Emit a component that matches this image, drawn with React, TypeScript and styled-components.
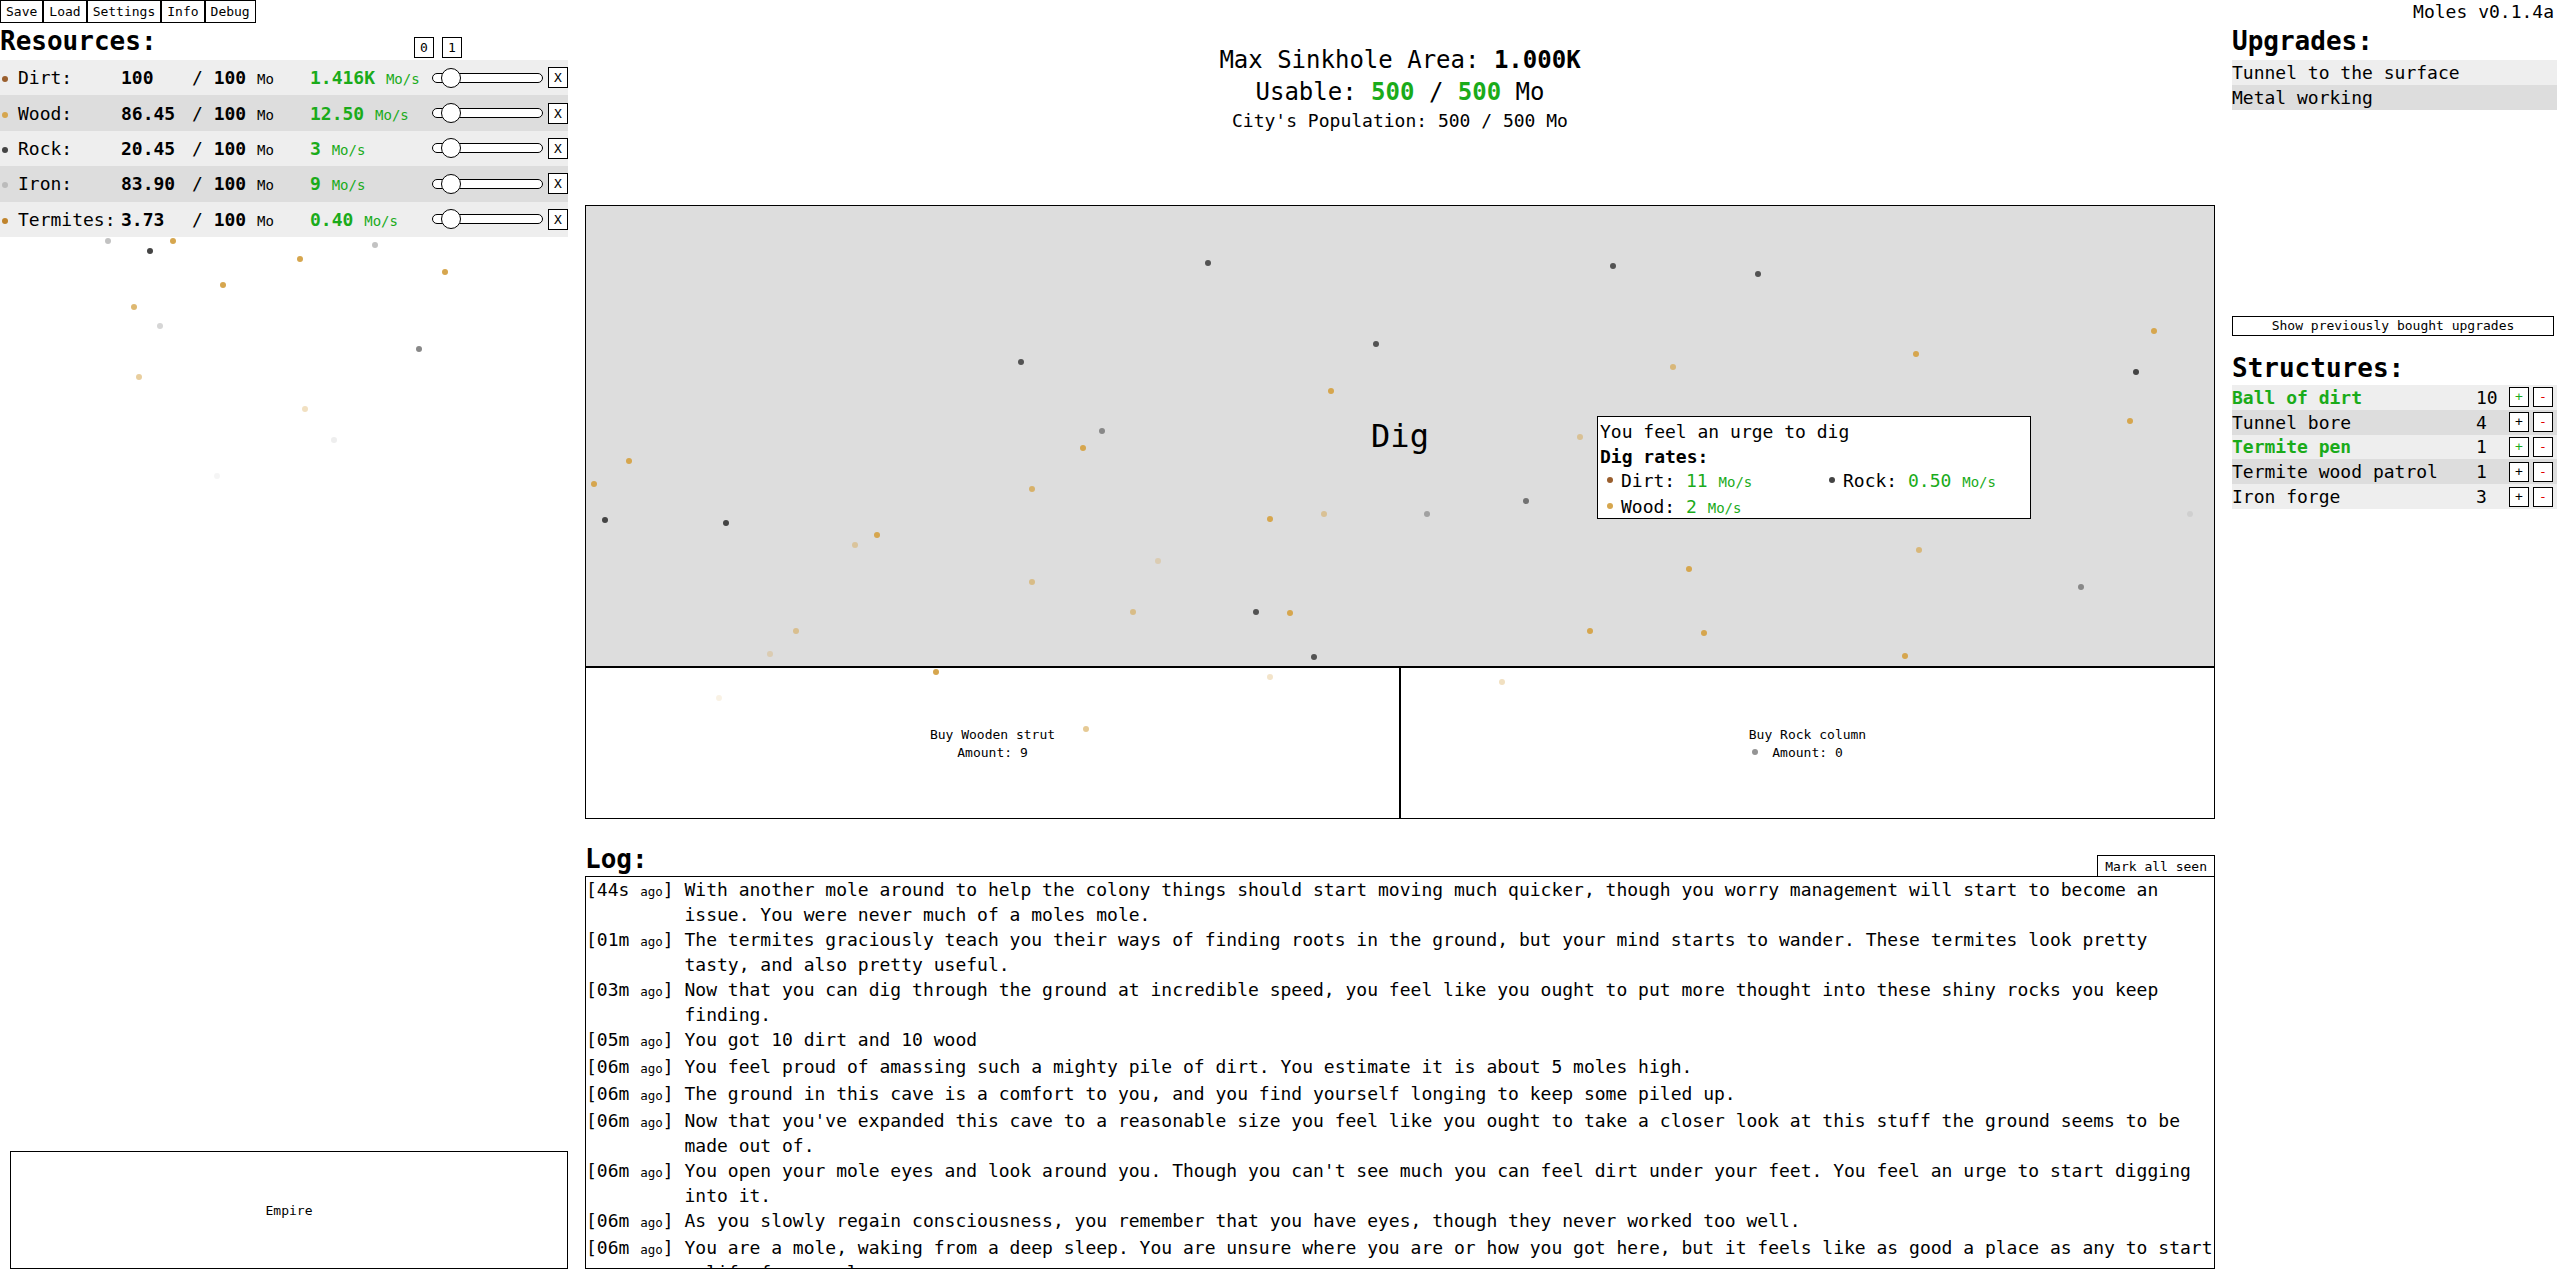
import React from "react";
import styled, { createGlobalStyle } from "styled-components";

const GREEN = "#1aab1a";
const MONO = `"DejaVu Sans Mono", "Liberation Mono", monospace`;

const GlobalStyle = createGlobalStyle`
  html, body { margin: 0; padding: 0; background: #ffffff; }
  body { font-family: ${MONO}; color: #000; }
  * { box-sizing: border-box; }
`;

const Page = styled.div`
  position: relative;
  display: grid;
  grid-template-columns: 568px 1630px 1fr;
  column-gap: 17px;
  width: 2557px;
  height: 1280px;
  overflow: hidden;
`;

/* ---------- shared ---------- */

const SmallButton = styled.button`
  font-family: ${MONO};
  font-size: 13px;
  color: #000;
  background: #fff;
  border: 1px solid #000;
  border-radius: 0;
  margin: 0;
  padding: 0 5px;
  height: 23px;
  line-height: 21px;
  cursor: pointer;
`;

const BoxButton = styled.button<{ $color?: string }>`
  font-family: ${MONO};
  font-size: 13px;
  color: ${(p) => p.$color ?? "#000"};
  background: #fff;
  border: 1px solid #000;
  border-radius: 0;
  margin: 0;
  padding: 0;
  width: 20px;
  height: 21px;
  line-height: 19px;
  text-align: center;
  cursor: pointer;
`;

const SectionTitle = styled.h2<{ $height?: number }>`
  margin: 0;
  font-size: 26px;
  font-weight: bold;
  line-height: ${(p) => p.$height ?? 37}px;
  height: ${(p) => p.$height ?? 37}px;
`;

const ShadedRow = styled.div<{ $dark: boolean }>`
  background: ${(p) => (p.$dark ? "#dddddd" : "#eeeeee")};
`;

const Small = styled.span`
  font-size: 14px;
  font-weight: normal;
`;

/* ---------- left column ---------- */

const LeftColumn = styled.div`
  display: flex;
  flex-direction: column;
  height: 1280px;
`;

const Nav = styled.nav`
  display: flex;
  height: 23px;
`;

const ResHeader = styled.div`
  display: flex;
  align-items: flex-end;
`;

const ResTitleCell = styled.div`
  flex: 0 0 414px;
`;

const ZoomButtons = styled.div`
  display: flex;
  gap: 8px;
  padding-bottom: 2px;
`;

const ResourceRow = styled(ShadedRow)`
  display: grid;
  grid-template-columns: 18px 103px 71px 118px 122px 116px 20px;
  align-items: center;
  height: 35.4px;
  font-size: 18px;
`;

const Dot = styled.span<{ $color: string }>`
  display: block;
  width: 6px;
  height: 6px;
  border-radius: 50%;
  background: ${(p) => p.$color};
  margin-left: 2px;
  margin-top: 3px;
`;

const ResName = styled.span``;

const ResValue = styled.span`
  font-weight: bold;
`;

const ResMax = styled.span`
  white-space: pre;
`;

const Bold = styled.b``;

const Rate = styled.span`
  color: ${GREEN};
  font-weight: bold;
  white-space: pre;
`;

const SliderCell = styled.div`
  position: relative;
  display: flex;
  align-items: center;
  height: 22px;
  padding-right: 5px;
`;

const SliderTrack = styled.div`
  width: 100%;
  height: 10px;
  border: 1px solid #000;
  border-radius: 6px;
  background: #fff;
`;

const SliderThumb = styled.div`
  position: absolute;
  left: 9px;
  top: 1px;
  width: 20px;
  height: 20px;
  border-radius: 50%;
  border: 1px solid #000;
  background: #fff;
`;

const EmpireBox = styled.div`
  margin: auto 0 11px 10px;
  width: 558px;
  height: 118px;
  border: 1px solid #000;
  display: flex;
  align-items: center;
  justify-content: center;
  font-size: 13px;
`;

/* ---------- center column ---------- */

const CenterColumn = styled.div`
  display: flex;
  flex-direction: column;
  height: 1280px;
`;

const Stats = styled.div`
  padding-top: 44px;
  text-align: center;
`;

const BigLine = styled.div`
  font-size: 24px;
  line-height: 32px;
`;

const PopLine = styled.div`
  font-size: 18px;
  line-height: 26px;
`;

const Green = styled.b`
  color: ${GREEN};
`;

const DigArea = styled.div`
  position: relative;
  margin-top: 71px;
  height: 462px;
  border: 1px solid #000;
  background: #dddddd;
  display: flex;
  align-items: center;
  justify-content: center;
  font-size: 32px;
`;

const Tooltip = styled.div`
  position: absolute;
  left: 1011px;
  top: 210px;
  width: 434px;
  height: 103px;
  border: 1px solid #000;
  background: #fff;
  z-index: 3;
  font-size: 18px;
  line-height: 24.5px;
  padding: 3px 2px 0;
`;

const RatesGrid = styled.div`
  display: grid;
  grid-template-columns: 222px 222px;
  padding-left: 7px;
`;

const RateItem = styled.div`
  display: flex;
  align-items: baseline;
  white-space: pre;
`;

const Bullet = styled.span<{ $color: string }>`
  display: inline-block;
  width: 6px;
  height: 6px;
  border-radius: 50%;
  background: ${(p) => p.$color};
  margin-right: 8px;
  transform: translateY(-4px);
`;

const RateValue = styled.span`
  color: ${GREEN};
`;

const BuyRow = styled.div`
  display: grid;
  grid-template-columns: 1fr 1fr;
`;

const BuyBox = styled.div`
  height: 152px;
  border: 1px solid #000;
  display: flex;
  flex-direction: column;
  align-items: center;
  justify-content: center;
  font-size: 13px;
  line-height: 18px;
  padding-top: 2px;
`;

const LogHeader = styled.div`
  margin-top: 17px;
  display: flex;
  justify-content: space-between;
  align-items: flex-end;
  height: 40px;
`;

const MarkButton = styled(SmallButton)`
  height: 21px;
  line-height: 19px;
  padding: 0 7px;
  border-bottom: none;
`;

const LogBox = styled.div`
  flex: 1;
  margin-bottom: 11px;
  border: 1px solid #000;
  overflow: hidden;
  padding: 0;
  font-size: 18px;
  line-height: 25px;
`;

const LogEntry = styled.div`
  display: flex;
`;

const Stamp = styled.span`
  flex: none;
  white-space: pre;
`;

const Ago = styled.span`
  font-size: 12.5px;
`;

const Message = styled.span`
  flex: 1;
  min-width: 0;
`;

/* ---------- right column ---------- */

const RightColumn = styled.div`
  display: flex;
  flex-direction: column;
`;

const Version = styled.div`
  height: 23px;
  line-height: 24px;
  font-size: 18px;
  text-align: right;
  padding-right: 3px;
`;

const UpgradeList = styled.div`
  height: 256px;
`;

const UpgradeRow = styled(ShadedRow)`
  height: 25px;
  line-height: 25px;
  font-size: 18px;
`;

const ShowButton = styled(SmallButton)`
  width: 322px;
  height: 20px;
  line-height: 18px;
`;

const StructTitle = styled(SectionTitle)`
  margin-top: 15px;
`;

const StructRow = styled(ShadedRow)`
  display: grid;
  grid-template-columns: 1fr 33px 20px 4px 20px 4px;
  align-items: center;
  height: 24.8px;
  font-size: 18px;
`;

const StructName = styled.span<{ $afford: boolean }>`
  color: ${(p) => (p.$afford ? GREEN : "#000")};
  font-weight: ${(p) => (p.$afford ? "bold" : "normal")};
`;

const StructButton = styled(BoxButton)`
  height: 20px;
  line-height: 18px;
`;

/* ---------- particles ---------- */

const ParticleLayer = styled.div`
  position: absolute;
  inset: 0;
  pointer-events: none;
  z-index: 2;
`;

const Particle = styled.span<{ $color: string }>`
  position: absolute;
  width: 6px;
  height: 6px;
  margin: -3px 0 0 -3px;
  border-radius: 50%;
  background: ${(p) => p.$color};
`;

/* ---------- data ---------- */

const resources = [
  { name: "Dirt:", color: "#9a5f2e", value: "100", rate: "1.416K" },
  { name: "Wood:", color: "#d6a64e", value: "86.45", rate: "12.50" },
  { name: "Rock:", color: "#444444", value: "20.45", rate: "3" },
  { name: "Iron:", color: "#bbbbbb", value: "83.90", rate: "9" },
  { name: "Termites:", color: "#c0842c", value: "3.73", rate: "0.40" },
];

const structures = [
  { name: "Ball of dirt", count: 10, afford: true },
  { name: "Tunnel bore", count: 4, afford: false },
  { name: "Termite pen", count: 1, afford: true },
  { name: "Termite wood patrol", count: 1, afford: false },
  { name: "Iron forge", count: 3, afford: false },
];

const logEntries: [string, string][] = [
  ["44s", "With another mole around to help the colony things should start moving much quicker, though you worry management will start to become an issue. You were never much of a moles mole."],
  ["01m", "The termites graciously teach you their ways of finding roots in the ground, but your mind starts to wander. These termites look pretty tasty, and also pretty useful."],
  ["03m", "Now that you can dig through the ground at incredible speed, you feel like you ought to put more thought into these shiny rocks you keep finding."],
  ["05m", "You got 10 dirt and 10 wood"],
  ["06m", "You feel proud of amassing such a mighty pile of dirt. You estimate it is about 5 moles high."],
  ["06m", "The ground in this cave is a comfort to you, and you find yourself longing to keep some piled up."],
  ["06m", "Now that you've expanded this cave to a reasonable size you feel like you ought to take a closer look at this stuff the ground seems to be made out of."],
  ["06m", "You open your mole eyes and look around you. Though you can't see much you can feel dirt under your feet. You feel an urge to start digging into it."],
  ["06m", "As you slowly regain consciousness, you remember that you have eyes, though they never worked too well."],
  ["06m", "You are a mole, waking from a deep sleep. You are unsure where you are or how you got here, but it feels like as good a place as any to start a life for a mole."],
];

const T = "#d6a64e";
const D = "#444444";
const G = "#888888";
const L = "#bbbbbb";

// positions in the 1568-wide reference scale, [x, y, color, opacity]
const particles: [number, number, string, number][] = [
  [66, 148, L, 0.9], [92, 154, D, 1], [106, 148, T, 1], [137, 175, T, 1],
  [184, 159, T, 1], [230, 150, L, 0.9], [273, 167, T, 1], [82, 188, T, 0.8],
  [98, 200, L, 0.6], [257, 214, G, 1], [85, 231, T, 0.55], [187, 251, T, 0.35],
  [205, 270, L, 0.25], [133, 292, L, 0.15],
  [741, 161, D, 0.9], [989, 163, D, 0.9], [1078, 168, D, 0.9], [1321, 203, T, 1],
  [1175, 217, T, 1], [1310, 228, D, 1], [844, 211, D, 0.9], [626, 222, D, 0.9],
  [1026, 225, T, 0.7], [816, 240, T, 1], [1306, 258, T, 1], [969, 268, T, 0.5],
  [676, 264, G, 1], [664, 275, T, 1], [386, 283, T, 1], [364, 297, T, 1],
  [633, 300, T, 0.8], [936, 307, D, 0.7], [875, 315, G, 0.7], [812, 315, T, 0.5],
  [779, 318, T, 1], [371, 319, D, 1], [445, 321, D, 1], [538, 328, T, 1],
  [524, 334, T, 0.45], [1177, 337, T, 0.7], [710, 344, T, 0.3], [1036, 349, T, 1],
  [633, 357, T, 0.6], [1276, 360, G, 1], [695, 375, T, 0.6], [770, 375, D, 0.9],
  [791, 376, T, 1], [488, 387, T, 0.55], [975, 387, T, 1], [1045, 388, T, 1],
  [472, 401, T, 0.3], [806, 403, D, 0.9], [1168, 402, T, 1], [1343, 315, L, 0.4],
  [574, 412, T, 1], [779, 415, T, 0.3], [921, 418, T, 0.35], [441, 428, T, 0.15],
  [666, 447, T, 0.6], [1076, 461, G, 0.9],
];

const SCALE = 2557 / 1568;

export default function App() {
  return (
    <>
      <GlobalStyle />
      <Page>
        <LeftColumn>
          <Nav>
            {["Save", "Load", "Settings", "Info", "Debug"].map((b) => (
              <SmallButton key={b}>{b}</SmallButton>
            ))}
          </Nav>
          <ResHeader>
            <ResTitleCell>
              <SectionTitle>Resources:</SectionTitle>
            </ResTitleCell>
            <ZoomButtons>
              <BoxButton>0</BoxButton>
              <BoxButton>1</BoxButton>
            </ZoomButtons>
          </ResHeader>
          {resources.map((r, i) => (
            <ResourceRow key={r.name} $dark={i % 2 === 1}>
              <Dot $color={r.color} />
              <ResName>{r.name}</ResName>
              <ResValue>{r.value}</ResValue>
              <ResMax>
                {"/ "}
                <Bold>100</Bold> <Small>Mo</Small>
              </ResMax>
              <Rate>
                {r.rate} <Small>Mo/s</Small>
              </Rate>
              <SliderCell>
                <SliderTrack />
                <SliderThumb />
              </SliderCell>
              <BoxButton>X</BoxButton>
            </ResourceRow>
          ))}
          <EmpireBox>Empire</EmpireBox>
        </LeftColumn>

        <CenterColumn>
          <Stats>
            <BigLine>
              Max Sinkhole Area: <b>1.000K</b>
            </BigLine>
            <BigLine>
              Usable: <Green>500</Green> / <Green>500</Green> Mo
            </BigLine>
            <PopLine>City's Population: 500 / 500 Mo</PopLine>
          </Stats>
          <DigArea>
            Dig
            <Tooltip>
              <div>You feel an urge to dig</div>
              <b>Dig rates:</b>
              <RatesGrid>
                <RateItem>
                  <Bullet $color="#9a5f2e" />
                  {"Dirt: "}
                  <RateValue>
                    11 <Small>Mo/s</Small>
                  </RateValue>
                </RateItem>
                <RateItem>
                  <Bullet $color="#444444" />
                  {"Rock: "}
                  <RateValue>
                    0.50 <Small>Mo/s</Small>
                  </RateValue>
                </RateItem>
                <RateItem>
                  <Bullet $color="#d6a64e" />
                  {"Wood: "}
                  <RateValue>
                    2 <Small>Mo/s</Small>
                  </RateValue>
                </RateItem>
              </RatesGrid>
            </Tooltip>
          </DigArea>
          <BuyRow>
            <BuyBox>
              <div>Buy Wooden strut</div>
              <div>Amount: 9</div>
            </BuyBox>
            <BuyBox>
              <div>Buy Rock column</div>
              <div>Amount: 0</div>
            </BuyBox>
          </BuyRow>
          <LogHeader>
            <SectionTitle $height={34}>Log:</SectionTitle>
            <MarkButton>Mark all seen</MarkButton>
          </LogHeader>
          <LogBox>
            {logEntries.map(([t, msg], i) => (
              <LogEntry key={i}>
                <Stamp>
                  [{t} <Ago>ago</Ago>]{" "}
                </Stamp>
                <Message>{msg}</Message>
              </LogEntry>
            ))}
          </LogBox>
        </CenterColumn>

        <RightColumn>
          <Version>Moles v0.1.4a</Version>
          <SectionTitle>Upgrades:</SectionTitle>
          <UpgradeList>
            <UpgradeRow $dark={false}>Tunnel to the surface</UpgradeRow>
            <UpgradeRow $dark={true}>Metal working</UpgradeRow>
          </UpgradeList>
          <ShowButton>Show previously bought upgrades</ShowButton>
          <StructTitle $height={34}>Structures:</StructTitle>
          {structures.map((s, i) => (
            <StructRow key={s.name} $dark={i % 2 === 1}>
              <StructName $afford={s.afford}>{s.name}</StructName>
              <span>{s.count}</span>
              <StructButton $color={s.afford ? GREEN : "#000"}>+</StructButton>
              <span />
              <StructButton $color="#e00000">-</StructButton>
              <span />
            </StructRow>
          ))}
        </RightColumn>

        <ParticleLayer>
          {particles.map(([x, y, c, o], i) => (
            <Particle
              key={i}
              $color={c}
              style={{ left: x * SCALE, top: y * SCALE, opacity: o }}
            />
          ))}
        </ParticleLayer>
      </Page>
    </>
  );
}
